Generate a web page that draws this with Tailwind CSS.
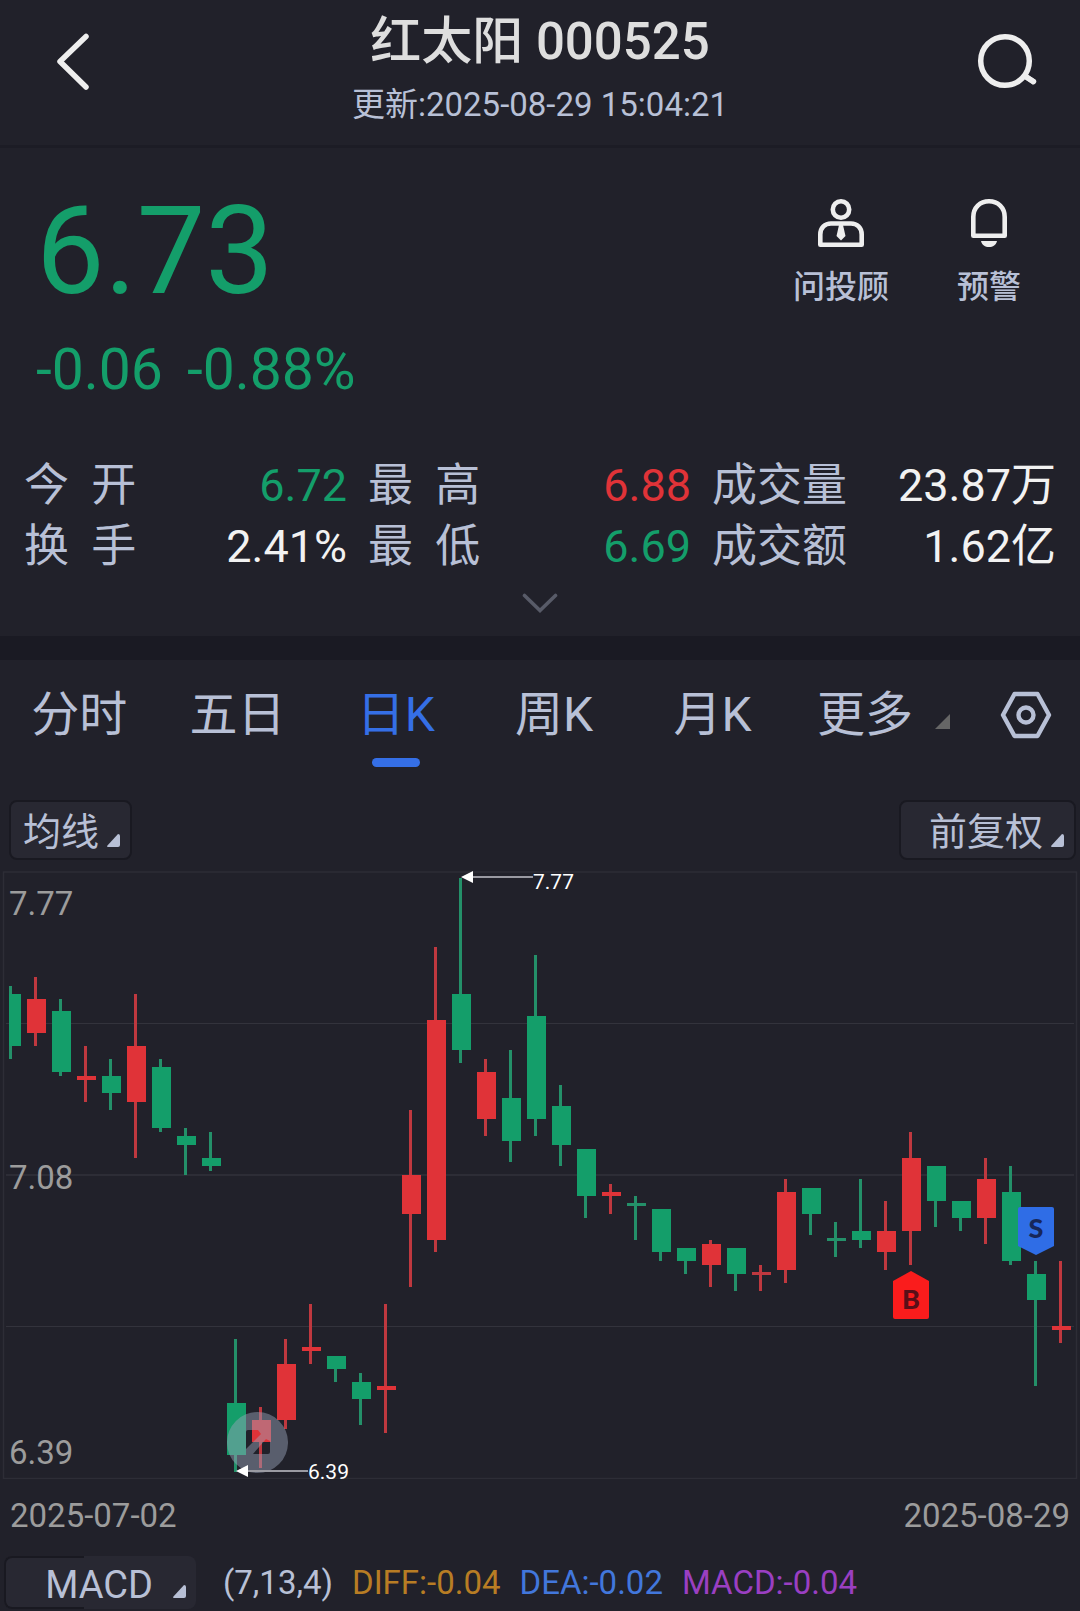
<!DOCTYPE html>
<html lang="zh-CN">

<head>
    <meta charset="UTF-8">
    <meta name="viewport" content="width=device-width, initial-scale=1.0">
    <title>红太阳 000525</title>
    <script src="https://cdn.jsdelivr.net/npm/@tailwindcss/browser@4"></script>
</head>

<body class="min-h-screen bg-[#21212a] font-['Roboto','Noto_Sans_CJK_SC',sans-serif] text-[#b8c0d6]">
    <header class="flex items-start justify-between border-b-3 border-[#1c1c25] pb-5">
        <button class="w-36 pt-8 pl-14" aria-label="返回">
            <svg class="h-[58px] w-9" viewBox="0 0 36 58" fill="none" stroke="#eeeeee" stroke-width="5.5"
                stroke-linecap="round" stroke-linejoin="round">
                <path d="M30 4.500 4 29.500 30 55" />
            </svg>
        </button>
        <div class="pt-3 text-center">
            <h1 class="text-[51px] leading-[60px] font-medium text-[#dedede]">红太阳 000525</h1>
            <p class="mt-[13px] text-[33px] leading-[40px]">更新:2025-08-29 15:04:21</p>
        </div>
        <button class="flex w-36 justify-end pt-8 pr-10" aria-label="搜索">
            <svg class="h-[58px] w-[64px]" viewBox="0 0 64 58" fill="none" stroke="#eeeeee" stroke-width="5.5"
                stroke-linecap="round">
                <circle cx="29" cy="29" r="24.300" />
                <path d="M48 43.500 58.500 50.500" stroke-linecap="butt" />
                <path d="M49 44 57.500 49.500" />
            </svg>
        </button>
    </header>

    <main>
        <!-- Quote -->
        <section class="border-b-24 border-[#1a1a23] pb-[23px]">
            <div class="flex items-start justify-between">
                <div class="pt-[42px] pl-9 text-[#149e6a]">
                    <div class="text-[122px] leading-[124px]">6.73</div>
                    <div class="mt-6 flex gap-6 text-[57px] leading-[64px]">
                        <span>-0.06</span>
                        <span>-0.88%</span>
                    </div>
                </div>
                <div class="flex gap-[68px] pt-[51px] pr-[59px] text-[32px] leading-[40px] font-medium">
                    <button class="flex flex-col items-center gap-5">
                        <svg class="size-12" viewBox="0 0 48 48" fill="none" stroke="#eeeeee" stroke-width="4.6">
                            <circle cx="24" cy="10.500" r="8.200" />
                            <path d="M3.300 45.700V35.500C3.300 28.500 8 24.500 14 24.500H34C40 24.500 44.700 28.500 44.700 35.500V45.700Z"
                                stroke-linejoin="round" />
                            <path d="M22 26H26L28.500 37 24 41.500 19.500 37Z" fill="#eeeeee" stroke="none" />
                        </svg>
                        <span>问投顾</span>
                    </button>
                    <button class="flex flex-col items-center gap-5">
                        <svg class="size-12" viewBox="0 0 48 48" fill="none" stroke="#eeeeee" stroke-width="4.600">
                            <path d="M8.300 36.700V18C8.300 8.500 15 2.300 24 2.300S39.700 8.500 39.700 18V36.700Z"
                                stroke-linejoin="round" />
                            <path d="M16 42H32C31 46 28 48 24 48S17 46 16 42Z" fill="#eeeeee" stroke="none" />
                        </svg>
                        <span>预警</span>
                    </button>
                </div>
            </div>

            <dl class="mt-[53px] grid grid-cols-3 px-6 text-[45px] leading-[61px]">
                <div class="flex justify-between pr-[21px]">
                    <dt>今&nbsp;&nbsp;开</dt>
                    <dd class="text-[#149e6a]">6.72</dd>
                </div>
                <div class="flex justify-between pr-[21px]">
                    <dt>最&nbsp;&nbsp;高</dt>
                    <dd class="text-[#e03338]">6.88</dd>
                </div>
                <div class="flex justify-between">
                    <dt>成交量</dt>
                    <dd class="text-[#f2f2f2]">23.87万</dd>
                </div>
                <div class="flex justify-between pr-[21px]">
                    <dt>换&nbsp;&nbsp;手</dt>
                    <dd class="text-[#f2f2f2]">2.41%</dd>
                </div>
                <div class="flex justify-between pr-[21px]">
                    <dt>最&nbsp;&nbsp;低</dt>
                    <dd class="text-[#149e6a]">6.69</dd>
                </div>
                <div class="flex justify-between">
                    <dt>成交额</dt>
                    <dd class="text-[#f2f2f2]">1.62亿</dd>
                </div>
            </dl>
            <button class="mx-auto mt-4 block" aria-label="展开">
                <svg class="h-5 w-9" viewBox="0 0 36 20" fill="none" stroke="#585b68" stroke-width="3.600"
                    stroke-linecap="round">
                    <path d="M2.500 2.500 18 17.500 33.500 2.500" />
                </svg>
            </button>
        </section>

        <!-- Period tabs -->
        <nav class="flex items-start pt-[25px] text-[48px] leading-[60px]">
            <button class="flex-1">分时</button>
            <button class="flex-1">五日</button>
            <button class="flex flex-1 flex-col items-center text-[#356fe6]">
                日K
                <span class="mt-[13px] h-[9px] w-12 rounded-full bg-[#356fe6]"></span>
            </button>
            <button class="flex-1">周K</button>
            <button class="flex-1">月K</button>
            <button class="flex flex-1 items-center justify-end gap-[22px] pr-2.5">
                更多
                <svg class="mt-3 size-[15px]" viewBox="0 0 15 15" fill="#666666">
                    <path d="M15 0V15H0Z" />
                </svg>
            </button>
            <button class="flex h-[60px] w-[120px] items-center justify-end pr-7" aria-label="设置">
                <svg class="h-12 w-[52px]" viewBox="0 0 52 48" fill="none" stroke="#b8c0d6" stroke-width="4.400">
                    <path d="M14.500 3H37.500L49 24 37.500 45H14.500L3 24Z" stroke-linejoin="round" />
                    <circle cx="26" cy="24" r="7.500" />
                </svg>
            </button>
        </nav>

        <div class="mt-[33px] flex justify-between pr-1 pl-[9px] text-[38px] leading-[52px]">
            <button class="flex items-center gap-2 rounded-lg border-2 border-[#191921] bg-[#282832] pt-1 pr-2.5 pl-3">
                均线
                <svg class="mt-4 size-[13px]" viewBox="0 0 13 13" fill="#b8c0d6">
                    <path d="M11 0Q13 0 13 2V11Q13 13 11 13H1Q0 13 0 12Z" />
                </svg>
            </button>
            <button
                class="flex items-center gap-2 rounded-lg border-2 border-[#191921] bg-[#282832] pt-1 pr-2.5 pl-7">
                前复权
                <svg class="mt-4 size-[13px]" viewBox="0 0 13 13" fill="#b8c0d6">
                    <path d="M11 0Q13 0 13 2V11Q13 13 11 13H1Q0 13 0 12Z" />
                </svg>
            </button>
        </div>

        <!-- Candlestick chart -->
        <div class="relative mt-[11px]">
            <svg class="block w-full" viewBox="0 0 1080 608">
                <g fill="none" stroke="#2d2d36">
                    <rect x="3.500" y="1" width="1073" height="606.500" stroke-width="1.500" />
                    <path d="M6 152.500H1074M6 455.500H1074" stroke="#33333c" />
                    <path d="M6 304H1074" stroke-width="2" />
                </g>
                <g id="candles"></g>
                <g font-size="33" fill="#9c9c9c">
                    <text x="9" y="44">7.77</text>
                    <text x="9" y="318">7.08</text>
                    <text x="9" y="593">6.39</text>
                </g>
                <!-- sell and buy marks -->
                <g font-family="Lato, sans-serif" font-size="27" font-weight="900" text-anchor="middle">
                    <path d="M1020 336H1052Q1054 336 1054 338V375L1036 384 1018 375V338Q1018 336 1020 336Z"
                        fill="#2f6de6" />
                    <text x="1036" y="367" fill="#17275a">S</text>
                    <path d="M911 400 929 410V446Q929 448 927 448H895Q893 448 893 446V410Z" fill="#fa1c1c" />
                    <text x="911" y="438" fill="#5a0f18">B</text>
                </g>
            </svg>
            <button class="absolute top-[89%] left-[21%]" aria-label="全屏">
                <svg class="size-[61px]" viewBox="0 0 61 61" fill="#9aa3b8" fill-opacity="0.47" fill-rule="evenodd">
                    <path
                        d="M30.500 0A30.500 30.500 0 1 1 30.500 61A30.500 30.500 0 1 1 30.500 0ZM21 18Q19 18 19 20V37L34 22 31 18ZM43 29 39 27 26 42H41Q43 42 43 40Z" />
                </svg>
            </button>
            <!-- highest and lowest price pointers -->
            <svg class="pointer-events-none absolute inset-0 w-full overflow-visible" viewBox="0 0 1080 608"
                fill="#ffffff" font-size="21">
                <path d="M472 6H533M247 600H308" stroke="#9a9aa2" stroke-width="2" />
                <path d="M461 6 473 0V12ZM236 600 248 594V606Z" />
                <text x="533" y="18">7.77</text>
                <text x="308" y="608">6.39</text>
            </svg>
        </div>

        <div class="mt-[17px] flex justify-between px-[10px] text-[33px] leading-[40px] text-[#9c9c9c]">
            <time>2025-07-02</time>
            <time>2025-08-29</time>
        </div>

        <div class="mt-5 flex items-center gap-[19px] pl-1 text-[33px] leading-[40px]">
            <button
                class="relative mr-2 flex w-48 items-center justify-end gap-5 rounded-lg bg-[#282832] pt-1.5 pr-2.5 text-[38px] leading-[47px]">
                <span class="absolute inset-y-0 left-0 w-20 rounded-l-lg border-y-2 border-l-2 border-[#191921]"></span>
                MACD
                <svg class="mt-3 size-[13px]" viewBox="0 0 13 13" fill="#b8c0d6">
                    <path d="M11 0Q13 0 13 2V11Q13 13 11 13H1Q0 13 0 12Z" />
                </svg>
            </button>
            <span>(7,13,4)</span>
            <span class="text-[#b87d24]">DIFF:-0.04</span>
            <span class="text-[#4277dc]">DEA:-0.02</span>
            <span class="text-[#9a3fc2]">MACD:-0.04</span>
        </div>
    </main>

    <script>
        // [open, high, low, close] per trading day
        const days = [
            [7.50, 7.52, 7.35, 7.38], [7.41, 7.54, 7.38, 7.49], [7.46, 7.49, 7.31, 7.32],
            [7.30, 7.38, 7.25, 7.31], [7.31, 7.35, 7.23, 7.27], [7.25, 7.50, 7.12, 7.38],
            [7.33, 7.35, 7.18, 7.19], [7.17, 7.19, 7.08, 7.15], [7.12, 7.18, 7.09, 7.10],
            [6.55, 6.70, 6.39, 6.43], [6.46, 6.54, 6.40, 6.51], [6.51, 6.70, 6.49, 6.64],
            [6.67, 6.78, 6.64, 6.68], [6.66, 6.66, 6.60, 6.63], [6.60, 6.62, 6.50, 6.56],
            [6.58, 6.78, 6.48, 6.59], [6.99, 7.23, 6.82, 7.08], [6.93, 7.61, 6.90, 7.44],
            [7.50, 7.77, 7.34, 7.37], [7.21, 7.35, 7.17, 7.32], [7.26, 7.37, 7.11, 7.16],
            [7.45, 7.59, 7.17, 7.21], [7.24, 7.29, 7.10, 7.15], [7.14, 7.14, 6.98, 7.03],
            [7.03, 7.06, 6.99, 7.04], [7.01, 7.03, 6.93, 7.01, 'down'], [7.00, 7.00, 6.88, 6.90],
            [6.91, 6.91, 6.85, 6.88], [6.87, 6.93, 6.82, 6.92], [6.91, 6.91, 6.81, 6.85],
            [6.85, 6.87, 6.81, 6.85], [6.86, 7.07, 6.83, 7.04], [7.05, 7.05, 6.94, 6.99],
            [6.93, 6.97, 6.89, 6.93, 'down'], [6.95, 7.07, 6.91, 6.93], [6.90, 7.02, 6.86, 6.95],
            [6.95, 7.18, 6.87, 7.12], [7.10, 7.10, 6.96, 7.02], [7.02, 7.02, 6.95, 6.98],
            [6.98, 7.12, 6.92, 7.07], [7.04, 7.10, 6.87, 6.88], [6.85, 6.88, 6.59, 6.79],
            [6.72, 6.88, 6.69, 6.73]
        ];

        const group = document.getElementById('candles');
        const toY = (price) => Math.round(7 + (7.77 - price) * 430.4);

        function addRect(x, y, width, height, color) {
            const rect = document.createElementNS('http://www.w3.org/2000/svg', 'rect');
            rect.setAttribute('x', x);
            rect.setAttribute('y', y);
            rect.setAttribute('width', width);
            rect.setAttribute('height', height);
            rect.setAttribute('fill', color);
            group.appendChild(rect);
        }

        days.forEach(([open, high, low, close, flat], i) => {
            const up = close >= open && flat !== 'down';
            const x = 11 + i * 25;
            // The first body is cut off at the chart's left edge
            const left = Math.max(x - 9, 9);
            const top = toY(Math.max(open, close));
            const height = toY(Math.min(open, close)) - top;

            addRect(x - 2, toY(high), 3, toY(low) - toY(high), up ? '#bf383f' : '#249069');
            if (height === 0) {
                addRect(left, top - 2, x + 10 - left, 3, up ? '#bf383f' : '#249069');
            } else {
                addRect(left, top, x + 10 - left, height, up ? '#e03338' : '#149e6a');
            }
        });
    </script>
</body>

</html>
